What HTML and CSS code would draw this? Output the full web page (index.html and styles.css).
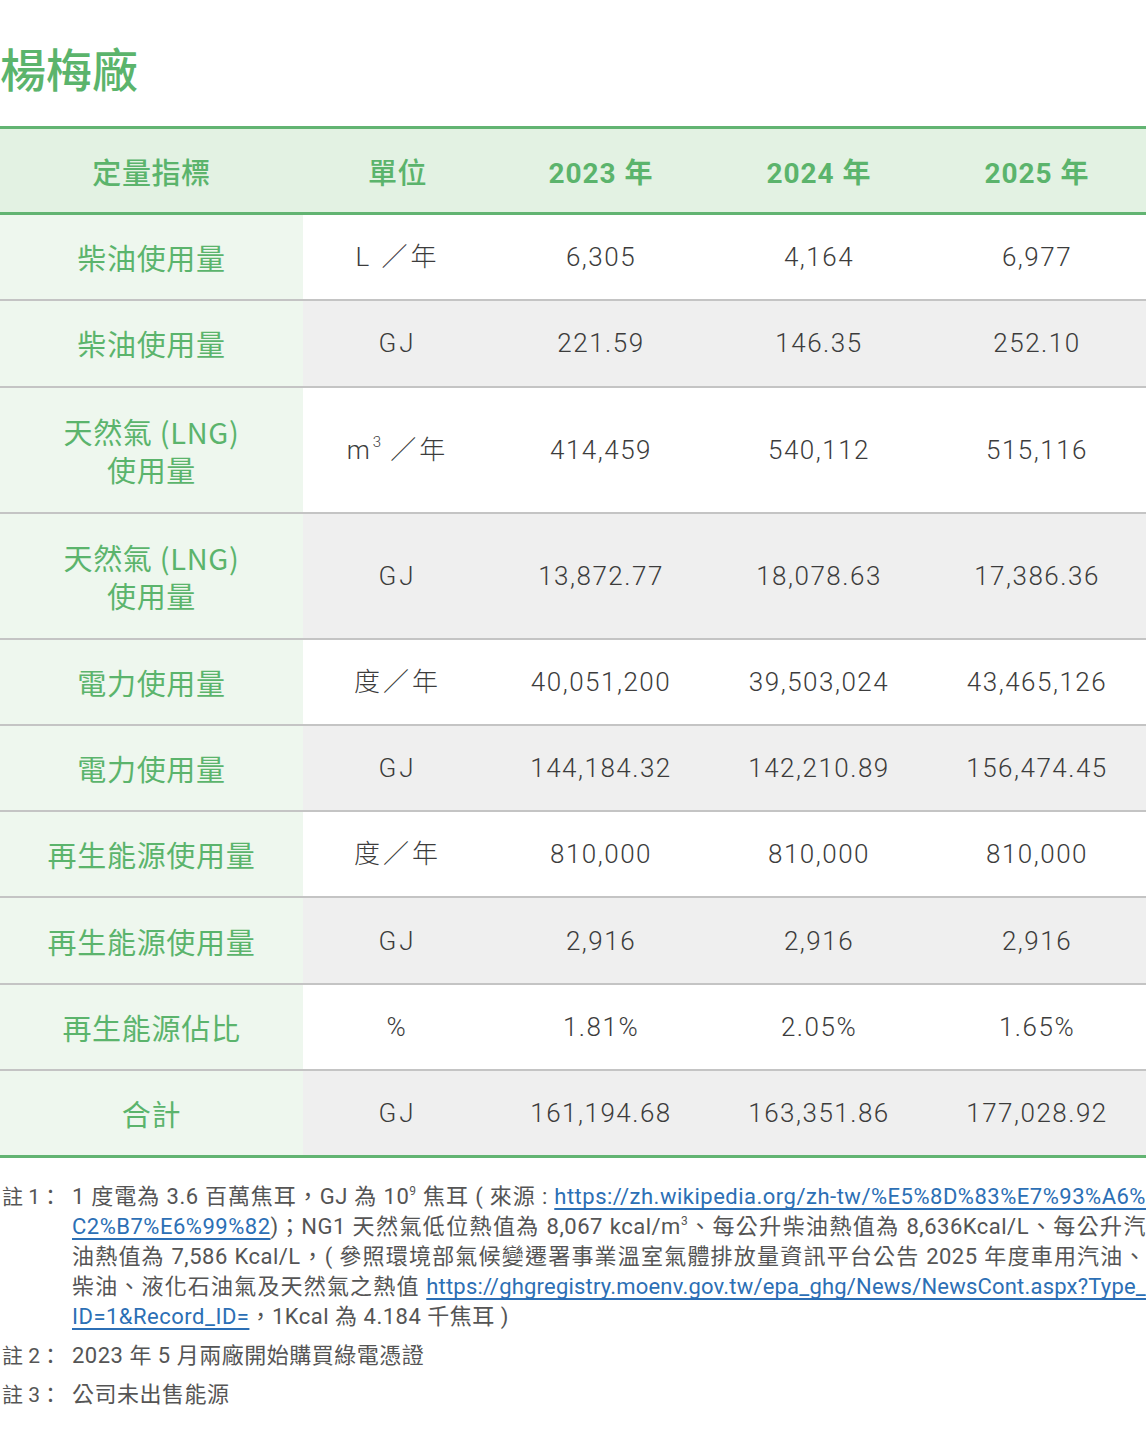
FILE: index.html
```html
<!DOCTYPE html>
<html lang="zh-Hant">
<head>
<meta charset="utf-8">
<title>楊梅廠</title>
<link rel="stylesheet" href="styles.css">
</head>
<body>
<h1 class="title">楊梅廠</h1>
<table class="data">
  <colgroup>
    <col class="c1"><col class="c2"><col class="c3"><col class="c4"><col class="c5">
  </colgroup>
  <thead>
    <tr><th>定量指標</th><th>單位</th><th>2023 年</th><th>2024 年</th><th>2025 年</th></tr>
  </thead>
  <tbody>
    <tr><td class="name">柴油使用量</td><td class="unit">L ／年</td><td>6,305</td><td>4,164</td><td>6,977</td></tr>
    <tr class="alt"><td class="name">柴油使用量</td><td class="unit">GJ</td><td>221.59</td><td>146.35</td><td>252.10</td></tr>
    <tr class="tall"><td class="name">天然氣 (LNG)<br>使用量</td><td class="unit">m<sup>3</sup> ／年</td><td>414,459</td><td>540,112</td><td>515,116</td></tr>
    <tr class="alt tall"><td class="name">天然氣 (LNG)<br>使用量</td><td class="unit">GJ</td><td>13,872.77</td><td>18,078.63</td><td>17,386.36</td></tr>
    <tr><td class="name">電力使用量</td><td class="unit">度／年</td><td>40,051,200</td><td>39,503,024</td><td>43,465,126</td></tr>
    <tr class="alt"><td class="name">電力使用量</td><td class="unit">GJ</td><td>144,184.32</td><td>142,210.89</td><td>156,474.45</td></tr>
    <tr><td class="name">再生能源使用量</td><td class="unit">度／年</td><td>810,000</td><td>810,000</td><td>810,000</td></tr>
    <tr class="alt"><td class="name">再生能源使用量</td><td class="unit">GJ</td><td>2,916</td><td>2,916</td><td>2,916</td></tr>
    <tr><td class="name">再生能源佔比</td><td class="unit">%</td><td>1.81%</td><td>2.05%</td><td>1.65%</td></tr>
    <tr class="alt last"><td class="name">合計</td><td class="unit">GJ</td><td>161,194.68</td><td>163,351.86</td><td>177,028.92</td></tr>
  </tbody>
</table>
<div class="notes">
  <div class="note"><span class="label">註 1：</span><span class="text"><span class="ln">1 度電為 3.6 百萬焦耳，GJ 為 10<sup>9</sup> 焦耳 ( 來源 : <a href="#">https://zh.wikipedia.org/zh-tw/%E5%8D%83%E7%93%A6%</a></span><span class="ln"><a href="#">C2%B7%E6%99%82</a>)；NG1 天然氣低位熱值為 8,067 kcal/m<sup>3</sup>、每公升柴油熱值為 8,636Kcal/L、每公升汽</span><span class="ln">油熱值為 7,586 Kcal/L，( 參照環境部氣候變遷署事業溫室氣體排放量資訊平台公告 2025 年度車用汽油、</span><span class="ln tight">柴油、液化石油氣及天然氣之熱值 <a href="#">https://ghgregistry.moenv.gov.tw/epa_ghg/News/NewsCont.aspx?Type_</a></span><span class="ln end"><a href="#">ID=1&amp;Record_ID=</a>，1Kcal 為 4.184 千焦耳 )</span></span></div>
  <div class="note"><span class="label">註 2：</span><span class="text">2023 年 5 月兩廠開始購買綠電憑證</span></div>
  <div class="note"><span class="label">註 3：</span><span class="text">公司未出售能源</span></div>
</div>
</body>
</html>
```
FILE: styles.css
```css
html, body {
  margin: 0;
  padding: 0;
  background: #ffffff;
}
body {
  width: 1146px;
  font-family: "Noto Sans CJK TC", "Noto Sans", sans-serif;
  color: #4a4a4a;
}
.title {
  margin: 0;
  padding: 36px 0 0 0;
  height: 90px;
  font-size: 46px;
  line-height: 62px;
  font-weight: 500;
  color: #5bb46c;
  letter-spacing: 0;
}
.data {
  width: 1146px;
  border-collapse: collapse;
  table-layout: fixed;
}
.c1 { width: 303px; }
.c2 { width: 189px; }
.c3 { width: 218px; }
.c4 { width: 218px; }
.c5 { width: 218px; }
.data th {
  height: 83px;
  padding: 0;
  background: #e3f2e3;
  border-top: 3px solid #62b472;
  border-bottom: 3px solid #62b472;
  color: #5bb46c;
  font-size: 28px;
  font-weight: 700;
  font-family: "Roboto", "Noto Sans CJK TC", sans-serif;
  text-align: center;
  vertical-align: middle;
  letter-spacing: 1px;
}
.data th:first-child, .data th:nth-child(2) {
  font-family: "Noto Sans CJK TC", sans-serif;
  font-weight: 500;
  font-size: 29px;
  letter-spacing: 0.6px;
}
.data td {
  height: 84.3px;
  padding: 0;
  border-bottom: 2px solid #c4c4c4;
  text-align: center;
  vertical-align: middle;
  font-family: "Roboto", "Noto Sans CJK TC", sans-serif;
  font-weight: 300;
  font-size: 26px;
  line-height: 34px;
  color: #3c3c3c;
  letter-spacing: 1.5px;
  background: #ffffff;
}
.data tr.alt td { background: #efefef; }
.data tr.tall td { height: 124px; }
.data td.name, .data tr.alt td.name {
  background: #eef7ee;
  color: #5bb46c;
  font-family: "Noto Sans CJK TC", sans-serif;
  font-weight: 400;
  font-size: 29px;
  line-height: 38px;
  letter-spacing: 0.7px;
}
.data td.unit {
  letter-spacing: 3px;
}
.data td sup {
  font-size: 15px;
  vertical-align: 12px;
  line-height: 0;
  letter-spacing: 0;
}
.data tr.last td {
  border-bottom: 3px solid #62b472;
}
.notes {
  padding-top: 24px;
  font-family: "Roboto", "Noto Sans CJK TC", sans-serif;
  font-size: 22px;
  letter-spacing: 0.5px;
  color: #555555;
}
.note {
  display: flex;
  line-height: 30px;
  margin-bottom: 9px;
}
.note .label {
  flex: 0 0 70px;
  padding-left: 2px;
  white-space: nowrap;
  letter-spacing: 0;
  font-size: 21px;
}
.note .text {
  flex: 1;
  min-width: 0;
}
.note .ln {
  display: block;
  white-space: nowrap;
  text-align: justify;
  text-align-last: justify;
}
.note .ln.tight {
  letter-spacing: 0.2px;
}
.note .ln.end {
  text-align: left;
  text-align-last: left;
}
.note a {
  color: #2c6fb5;
  text-decoration: underline;
  text-underline-offset: 4px;
}
.note sup {
  font-size: 12px;
  vertical-align: 9px;
  line-height: 0;
}
```
